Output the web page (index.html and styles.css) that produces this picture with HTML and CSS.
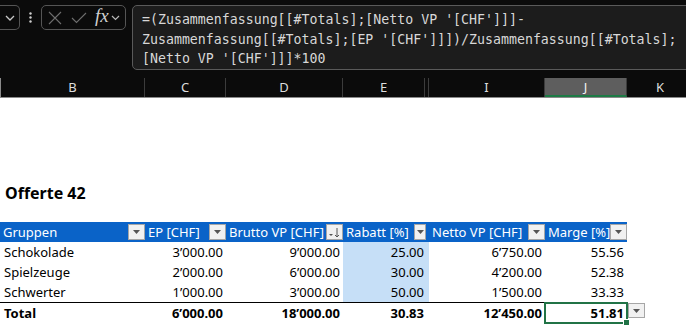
FILE: index.html
```html
<!DOCTYPE html>
<html lang="de">
<head>
    <meta charset="UTF-8">
    <title>Offerte 42</title>
    <link rel="stylesheet" href="styles.css">
</head>
<body>

<div class="formulabar">
    <div class="namebox">
        <svg width="10" height="6" viewBox="0 0 10 6"><path d="M1 1 L5 5 L9 1" fill="none" stroke="#c8c8c8" stroke-width="1.3"/></svg>
    </div>
    <div class="grip">
        <svg width="3" height="11" viewBox="0 0 3 11"><circle cx="1.5" cy="1.5" r="1.2" fill="#cfcfcf"/><circle cx="1.5" cy="5.5" r="1.2" fill="#cfcfcf"/><circle cx="1.5" cy="9.5" r="1.2" fill="#cfcfcf"/></svg>
    </div>
    <div class="fxbox">
        <svg class="ico-x" width="14" height="14" viewBox="0 0 14 14"><path d="M1 1 L13 13 M13 1 L1 13" stroke="#6e6e6e" stroke-width="1.1"/></svg>
        <svg class="ico-ok" width="16" height="12" viewBox="0 0 16 12"><path d="M1 6 L5.5 10.5 L15 1" fill="none" stroke="#6e6e6e" stroke-width="1.1"/></svg>
        <span class="fx">fx</span>
        <svg width="9" height="6" viewBox="0 0 9 6"><path d="M1 1 L4.5 4.5 L8 1" fill="none" stroke="#b8b8b8" stroke-width="1.2"/></svg>
    </div>
    <div class="formula">
        <div>=(Zusammenfassung[[#Totals];[Netto VP '[CHF']]]-</div>
        <div>Zusammenfassung[[#Totals];[EP '[CHF']]])/Zusammenfassung[[#Totals];</div>
        <div>[Netto VP '[CHF']]]*100</div>
    </div>
</div>

<div class="colheads">
    <div class="colhead col-b">B</div>
    <div class="colhead col-c">C</div>
    <div class="colhead col-d">D</div>
    <div class="colhead col-e">E</div>
    <div class="colhead col-hidden"></div>
    <div class="colhead col-i">I</div>
    <div class="colhead col-j active">J</div>
    <div class="colhead col-k">K</div>
</div>

<div class="sheet">
    <div class="title">Offerte 42</div>

    <table class="tbl">
        <colgroup>
            <col class="w-b"><col class="w-c"><col class="w-d"><col class="w-e"><col class="w-i"><col class="w-j">
        </colgroup>
        <thead>
            <tr>
                <th><div class="hcell"><span>Gruppen</span><span class="dd"><svg width="7" height="4" viewBox="0 0 7 4"><path d="M0 0 H7 L3.5 4 Z" fill="#555"/></svg></span></div></th>
                <th><div class="hcell"><span>EP [CHF]</span><span class="dd"><svg width="7" height="4" viewBox="0 0 7 4"><path d="M0 0 H7 L3.5 4 Z" fill="#555"/></svg></span></div></th>
                <th><div class="hcell"><span>Brutto VP [CHF]</span><span class="dd"><svg width="13" height="11" viewBox="0 0 13 11"><path d="M1 7 H5 L3 9 Z" fill="#555"/><path d="M9 1 V10 M7 8 L9 10 L11 8" fill="none" stroke="#555" stroke-width="1"/></svg></span></div></th>
                <th class="pad-e"><div class="hcell"><span>Rabatt [%]</span><span class="dd narrow"><svg width="7" height="4" viewBox="0 0 7 4"><path d="M0 0 H7 L3.5 4 Z" fill="#555"/></svg></span></div></th>
                <th><div class="hcell"><span>Netto VP [CHF]</span><span class="dd"><svg width="7" height="4" viewBox="0 0 7 4"><path d="M0 0 H7 L3.5 4 Z" fill="#555"/></svg></span></div></th>
                <th><div class="hcell"><span>Marge [%]</span><span class="dd"><svg width="7" height="4" viewBox="0 0 7 4"><path d="M0 0 H7 L3.5 4 Z" fill="#555"/></svg></span></div></th>
            </tr>
        </thead>
        <tbody>
            <tr>
                <td class="txt">Schokolade</td>
                <td>3’000.00</td>
                <td>9’000.00</td>
                <td class="hl">25.00</td>
                <td>6’750.00</td>
                <td>55.56</td>
            </tr>
            <tr>
                <td class="txt">Spielzeuge</td>
                <td>2’000.00</td>
                <td>6’000.00</td>
                <td class="hl">30.00</td>
                <td>4’200.00</td>
                <td>52.38</td>
            </tr>
            <tr>
                <td class="txt">Schwerter</td>
                <td>1’000.00</td>
                <td>3’000.00</td>
                <td class="hl">50.00</td>
                <td>1’500.00</td>
                <td>33.33</td>
            </tr>
            <tr class="total">
                <td class="txt">Total</td>
                <td>6’000.00</td>
                <td>18’000.00</td>
                <td class="pad-e">30.83</td>
                <td>12’450.00</td>
                <td class="sel">51.81
                    <span class="selbox"></span>
                    <span class="handle"></span>
                    <span class="dd cell-dd"><svg width="7" height="4" viewBox="0 0 7 4"><path d="M0 0 H7 L3.5 4 Z" fill="#555"/></svg></span>
                </td>
            </tr>
        </tbody>
    </table>
</div>

</body>
</html>
```

FILE: styles.css
```css
body {
    margin: 0;
    width: 686px;
    height: 326px;
    overflow: hidden;
    background-color: #fff;
    font-family: "Noto Sans", sans-serif;
}

/* formula bar */

.formulabar {
    height: 78px;
    box-sizing: border-box;
    padding-top: 5px;
    background-color: #0b0b0b;
    display: flex;
    align-items: flex-start;
}

.namebox {
    width: 20px;
    height: 25px;
    box-sizing: border-box;
    border: 1px solid #555;
    border-left: none;
    border-radius: 0 5px 5px 0;
    display: flex;
    align-items: center;
    padding-left: 5px;
}

.grip {
    width: 21px;
    height: 25px;
    display: flex;
    align-items: center;
    justify-content: center;
}

.fxbox {
    width: 85px;
    height: 25px;
    box-sizing: border-box;
    border: 1px solid #555;
    border-radius: 5px;
    display: flex;
    align-items: center;
    padding-left: 6px;
}

.ico-x {
    margin-right: 9px;
}

.ico-ok {
    margin-right: 8px;
}

.fx {
    font-family: "Liberation Serif", serif;
    font-style: italic;
    font-size: 19px;
    color: #cfcfcf;
    line-height: 20px;
    margin-right: 2px;
    margin-top: -3px;
}

.formula {
    flex: 1;
    margin-left: 6px;
    margin-right: -12px;
    height: 65px;
    box-sizing: border-box;
    border: 1px solid #5a5a5a;
    border-radius: 5px;
    background-color: #1c1c1c;
    padding: 4px 9px 0;
    font-family: "DejaVu Sans Mono", monospace;
    font-size: 13.25px;
    line-height: 19.5px;
    color: #d8d8d8;
    white-space: nowrap;
}

/* column headers */

.colheads {
    display: flex;
    height: 20px;
    box-sizing: border-box;
    background-color: #0b0b0b;
    border-bottom: 1px solid #8a8a8a;
}

.colhead {
    box-sizing: border-box;
    border-right: 1px solid #3c3c3c;
    color: #dedede;
    font-size: 13px;
    line-height: 19px;
    text-align: center;
    flex-shrink: 0;
}

.col-b { width: 145px; border-left: 1px solid #8a8a8a; }
.col-c { width: 81px; }
.col-d { width: 117px; }
.col-e { width: 82px; }
.col-hidden { width: 4px; }
.col-i { width: 116px; }
.col-j { width: 82px; }
.col-k { width: 66px; border-right: none; }

.colhead.active {
    background-color: #5e5e5e;
    border-bottom: 2px solid #1d7a45;
    color: #f2f2f2;
}

/* sheet */

.sheet {
    padding-top: 85px;
}

.title {
    padding-left: 5px;
    font-size: 16px;
    font-weight: bold;
    line-height: 20px;
    color: #000;
}

.tbl {
    margin-top: 19px;
    border-collapse: collapse;
    table-layout: fixed;
    width: 627px;
    font-size: 13px;
    color: #000;
}

.w-b { width: 145px; }
.w-c { width: 81px; }
.w-d { width: 117px; }
.w-e { width: 86px; }
.w-i { width: 116px; }
.w-j { width: 82px; }

.tbl th {
    background-color: #0a63c8;
    color: #fff;
    font-weight: normal;
    padding: 0;
    height: 20px;
}

.tbl th.pad-e {
    padding-right: 3px;
}

.hcell {
    display: flex;
    align-items: center;
    justify-content: space-between;
    height: 20px;
    padding-left: 3px;
    white-space: nowrap;
    line-height: 20px;
}

.dd {
    width: 17px;
    height: 16px;
    box-sizing: border-box;
    background-color: #f1f1f1;
    border: 1px solid #a6a6a6;
    display: flex;
    align-items: center;
    justify-content: center;
    flex-shrink: 0;
}

.dd.narrow {
    width: 12px;
}

.tbl td {
    height: 20px;
    padding: 0 3px 0 0;
    text-align: right;
    line-height: 20px;
    white-space: nowrap;
}

.tbl td.txt {
    text-align: left;
    padding-left: 4px;
}

.tbl td.hl {
    background-color: #c6dff7;
    padding-right: 5px;
}

.tbl td.pad-e {
    padding-right: 5px;
}

.tbl tr.total td {
    border-top: 1px solid #000;
    font-weight: bold;
}

.tbl td.sel {
    position: relative;
}

.selbox {
    position: absolute;
    left: -1px;
    top: -1px;
    right: -1px;
    bottom: -1px;
    border: 2px solid #217346;
}

.handle {
    position: absolute;
    right: -3px;
    bottom: -3px;
    width: 5px;
    height: 5px;
    background-color: #217346;
    border: 1px solid #fff;
}

.cell-dd {
    position: absolute;
    left: 100%;
    top: 0;
    margin-left: 1px;
    height: 15px;
}
```
